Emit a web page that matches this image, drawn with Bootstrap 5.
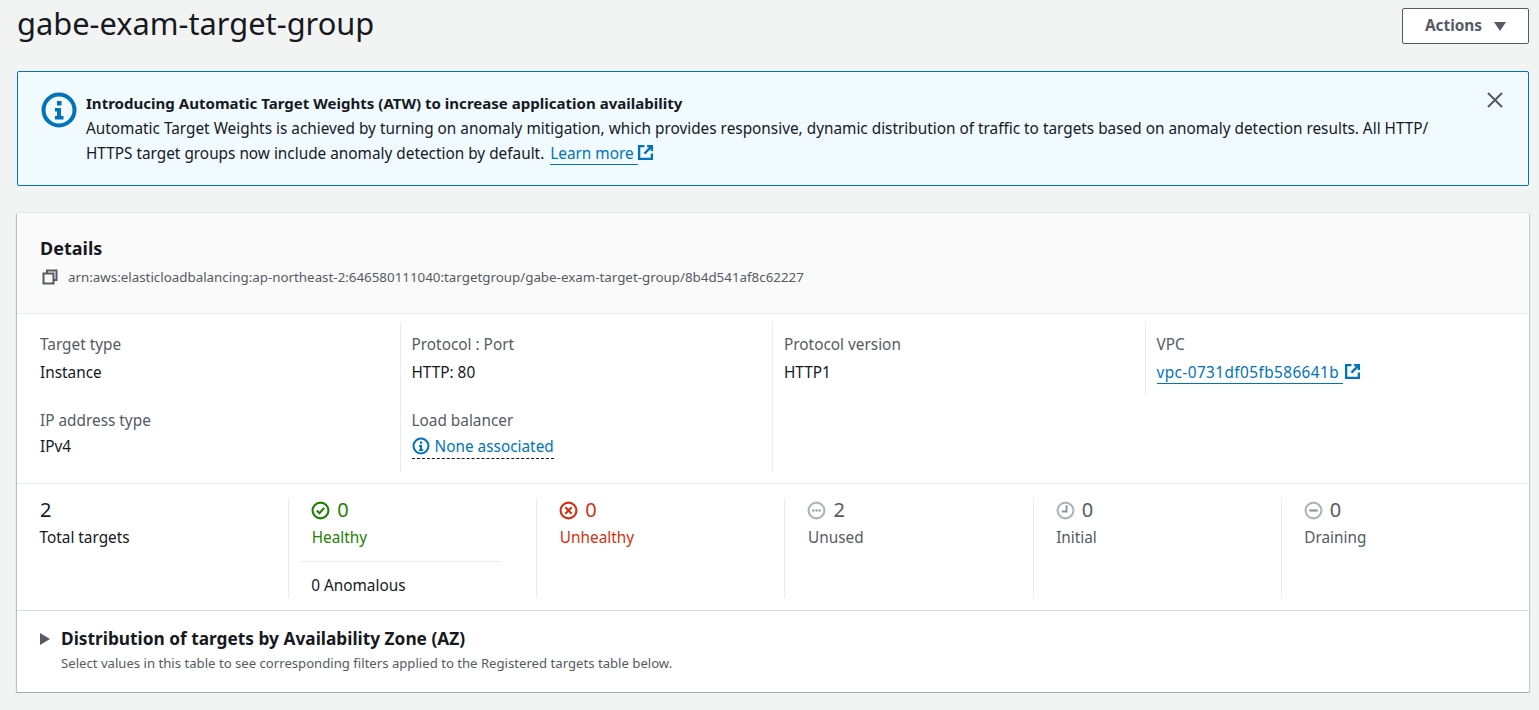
<!DOCTYPE html>
<html lang="en">
<head>
  <meta charset="UTF-8">
  <title>gabe-exam-target-group</title>
  <meta name="viewport" content="width=device-width, initial-scale=1">
  <link href="https://cdn.jsdelivr.net/npm/bootstrap@5.3.0/dist/css/bootstrap.min.css" rel="stylesheet">
  <style>
    body { background: #f2f3f3; color: #16191f; font-family: "Noto Sans", Roboto, sans-serif; font-size: 15.35px; line-height: 20px; }
    a { color: #0073bb; text-decoration: none; }
    .page-wrap { padding: 8px 10px 0 17px; }
    .page-title { font-size: 30.8px; line-height: 36px; font-weight: 400; margin: -3px 0 0; height: 33px; }
    .actions-btn { width: 127px; height: 36px; background: #fff; border: 1px solid #545b64; border-radius: 2px; color: #545b64; font-weight: 700; font-size: 15.4px; padding: 0; gap: 12px; }
    .atw-alert { height: 115px; margin-top: 27px; background: #f1faff; border: 1px solid #0073bb; border-radius: 2px; padding: 20px 24px 0 23px; line-height: 25px; }
    .atw-alert .alert-text { margin-left: 9px; margin-top: -1px; width: 1360px; }
    .bold-line { font-size: 15.05px; font-weight: 700; }
    .learn-link { border-bottom: 1px solid #0073bb; padding-bottom: 1px; }
    .learn-gap { margin-left: 2px; }
    .vpc-link { letter-spacing: .42px; }
    .ext-ico { margin-left: 1px; vertical-align: -2px; }
    .learn-gap + .ext-ico { margin-left: -1px; }
    .close-x { margin-left: auto; margin-right: 1px; }
    .details-card { margin-top: 27px; background: #fff; border: 0; border-bottom: 1px solid #9fabad; border-radius: 0; box-shadow: 0 1px 1px 0 rgba(0,28,36,.2), 1px 1px 1px 0 rgba(0,28,36,.15), -1px 1px 1px 0 rgba(0,28,36,.2), 0 -1px 1px 0 rgba(0,28,36,.06); height: 480px; }
    .details-head { height: 101px; background: #fafafa; border-bottom: 1px solid #eaeded; padding: 23px 23px 0; }
    .details-title { font-size: 18px; line-height: 24px; font-weight: 700; margin: 0; }
    .arn-line { color: #545b64; font-size: 13.35px; line-height: 20px; margin-top: 7px; gap: 10px; }
    .arn-line svg { margin-left: 2px; }
    .details-grid { height: 170px; padding: 8px 12px 0 10px; border-bottom: 1px solid #eaeded; }
    .info-cell { height: 74px; padding: 12px 12px 0 13px; line-height: 20px; }
    .info-row2 { height: 76px; padding-top: 14px; }
    .info-cell.with-rule { border-left: 1px solid #eaeded; padding-left: 11px; }
    .info-label { color: #545b64; margin-bottom: 8px; }
    .info-row2 .info-label { margin-bottom: 6px; }
    .none-link { border-bottom: 1px dashed #16191f; padding-bottom: 2px; display: inline-flex; align-items: center; gap: 5px; }
    .stats-band { height: 127px; padding: 14px 0 0 23px; border-bottom: 1px solid #d5dbdb; }
    .stat-cell { height: 100px; padding-left: 23px; }
    .stat-cell.stat-first { padding-left: 0; }
    .stat-cell.with-rule { border-left: 1px solid #eaeded; }
    .stat-num { font-size: 20px; line-height: 24px; gap: 7px; height: 24px; }
    .stat-num svg { margin-left: -1px; }
    .stat-name { margin-top: 5px; margin-left: -.5px; }
    .anomalous-rule { height: 1px; background: #eaeded; margin: 14px 34px 0 -12px; }
    .anomalous-text { margin-top: 13px; margin-left: -1px; }
    .tone-ok { color: #1d8102; }
    .tone-bad { color: #d13212; }
    .tone-off { color: #545b64; }
    .az-section { padding: 17px 23px 0; }
    .az-title { font-size: 17.3px; line-height: 22px; font-weight: 700; gap: 11px; }
    .az-sub { font-size: 13.15px; line-height: 16px; color: #545b64; margin: 5px 0 0 21px; }
  </style>
</head>
<body>
  <div class="page-wrap">

    <!-- Encabezado -->
    <div class="d-flex justify-content-between align-items-start">
      <h1 class="page-title">gabe-exam-target-group</h1>
      <button type="button" class="actions-btn d-flex align-items-center justify-content-center">
        Actions
        <svg width="12" height="9" viewBox="0 0 12 9"><path d="M0 0h12L6 9z" fill="#545b64"/></svg>
      </button>
    </div>

    <!-- Aviso -->
    <div class="atw-alert d-flex align-items-start">
      <svg width="36" height="36" viewBox="0 0 36 36" class="flex-shrink-0">
        <circle cx="18" cy="18" r="15.5" fill="none" stroke="#0073bb" stroke-width="4"/>
        <rect x="16" y="9" width="4.5" height="4.5" fill="#0073bb"/>
        <path d="M14 16h6v8h2.5v3.5h-8.5V24h2v-4.5h-2z" fill="#0073bb"/>
      </svg>
      <div class="alert-text">
        <div class="bold-line">Introducing Automatic Target Weights (ATW) to increase application availability</div>
        <div>Automatic Target Weights is achieved by turning on anomaly mitigation, which provides responsive, dynamic distribution of traffic to targets based on anomaly detection results. All HTTP/<br>HTTPS target groups now include anomaly detection by default. <a href="#" class="learn-link learn-gap">Learn more&nbsp;</a><svg width="17" height="17" viewBox="0 0 16 16" class="ext-ico"><path d="M7 2H2v12h12V9M9.5 2H14v4.500M14 2L7 9" fill="none" stroke="#0073bb" stroke-width="2.200"/></svg></div>
      </div>
      <svg width="16" height="16" viewBox="0 0 16 16" class="close-x"><path d="M1 1l14 14M15 1L1 15" stroke="#545b64" stroke-width="2"/></svg>
    </div>

    <!-- Tarjeta de detalles -->
    <div class="card details-card">
      <div class="details-head">
        <h2 class="details-title">Details</h2>
        <div class="arn-line d-flex align-items-center">
          <svg width="16" height="16" viewBox="0 0 16 16"><path d="M5 4V1.5h9.5V11H12M1.5 4.5H11.5V14.5H1.5z" fill="none" stroke="#545b64" stroke-width="2"/></svg>
          <span>arn:aws:elasticloadbalancing:ap-northeast-2:646580111040:targetgroup/gabe-exam-target-group/8b4d541af8c62227</span>
        </div>
      </div>

      <div class="details-grid">
        <div class="row g-0">
          <div class="col-3 info-cell">
            <div class="info-label">Target type</div>
            <div>Instance</div>
          </div>
          <div class="col-3 info-cell with-rule">
            <div class="info-label">Protocol : Port</div>
            <div>HTTP: 80</div>
          </div>
          <div class="col-3 info-cell with-rule">
            <div class="info-label">Protocol version</div>
            <div>HTTP1</div>
          </div>
          <div class="col-3 info-cell with-rule">
            <div class="info-label">VPC</div>
            <div><a href="#" class="learn-link vpc-link">vpc-0731df05fb586641b&nbsp;</a><svg width="17" height="17" viewBox="0 0 16 16" class="ext-ico"><path d="M7 2H2v12h12V9M9.5 2H14v4.500M14 2L7 9" fill="none" stroke="#0073bb" stroke-width="2.200"/></svg></div>
          </div>
        </div>
        <div class="row g-0">
          <div class="col-3 info-cell info-row2">
            <div class="info-label">IP address type</div>
            <div>IPv4</div>
          </div>
          <div class="col-3 info-cell info-row2 with-rule">
            <div class="info-label">Load balancer</div>
            <a href="#" class="none-link">
              <svg width="18" height="18" viewBox="0 0 18 18"><circle cx="9" cy="9" r="7.5" fill="none" stroke="#0073bb" stroke-width="2"/><rect x="8" y="4.5" width="2.2" height="2.2" fill="#0073bb"/><path d="M7 8h3v4.2h1.2V14H7v-1.8h1V9.700H7z" fill="#0073bb"/></svg>
              None associated
            </a>
          </div>
          <div class="col-3 info-cell info-row2 with-rule"></div>
          <div class="col-3 info-cell info-row2"></div>
        </div>
      </div>

      <div class="stats-band">
        <div class="row g-0">
          <div class="col-2 stat-cell stat-first">
            <div class="stat-num d-flex align-items-center">2</div>
            <div class="stat-name">Total targets</div>
          </div>
          <div class="col-2 stat-cell with-rule">
            <div class="stat-num d-flex align-items-center tone-ok">
              <svg width="19" height="19" viewBox="0 0 18 18"><circle cx="9" cy="9" r="7.500" fill="none" stroke="#1d8102" stroke-width="2"/><path d="M5.500 9l2.500 2.500 4.500-5" fill="none" stroke="#1d8102" stroke-width="2"/></svg>
              0
            </div>
            <div class="stat-name tone-ok">Healthy</div>
            <div class="anomalous-rule"></div>
            <div class="anomalous-text">0 Anomalous</div>
          </div>
          <div class="col-2 stat-cell with-rule">
            <div class="stat-num d-flex align-items-center tone-bad">
              <svg width="19" height="19" viewBox="0 0 18 18"><circle cx="9" cy="9" r="7.500" fill="none" stroke="#d13212" stroke-width="2"/><path d="M6 6l6 6M12 6l-6 6" stroke="#d13212" stroke-width="2"/></svg>
              0
            </div>
            <div class="stat-name tone-bad">Unhealthy</div>
          </div>
          <div class="col-2 stat-cell with-rule">
            <div class="stat-num d-flex align-items-center tone-off">
              <svg width="19" height="19" viewBox="0 0 18 18"><circle cx="9" cy="9" r="7.500" fill="none" stroke="#aab7b8" stroke-width="2"/><path d="M5 8h2v2H5zM8 8h2v2H8zM11 8h2v2h-2z" fill="#879596"/></svg>
              2
            </div>
            <div class="stat-name tone-off">Unused</div>
          </div>
          <div class="col-2 stat-cell with-rule">
            <div class="stat-num d-flex align-items-center tone-off">
              <svg width="19" height="19" viewBox="0 0 18 18"><circle cx="9" cy="9" r="7.500" fill="none" stroke="#aab7b8" stroke-width="2"/><path d="M10 4v6H5.500" fill="none" stroke="#879596" stroke-width="1.800"/></svg>
              0
            </div>
            <div class="stat-name tone-off">Initial</div>
          </div>
          <div class="col-2 stat-cell with-rule">
            <div class="stat-num d-flex align-items-center tone-off">
              <svg width="19" height="19" viewBox="0 0 18 18"><circle cx="9" cy="9" r="7.500" fill="none" stroke="#aab7b8" stroke-width="2"/><path d="M5 9h8" stroke="#879596" stroke-width="2"/></svg>
              0
            </div>
            <div class="stat-name tone-off">Draining</div>
          </div>
        </div>
      </div>

      <div class="az-section">
        <div class="az-title d-flex align-items-center">
          <svg width="10" height="12" viewBox="0 0 10 12"><path d="M0 0l10 6-10 6z" fill="#545b64"/></svg>
          Distribution of targets by Availability Zone (AZ)
        </div>
        <div class="az-sub">Select values in this table to see corresponding filters applied to the Registered targets table below.</div>
      </div>
    </div>
  </div>

  <script src="https://cdn.jsdelivr.net/npm/bootstrap@5.3.0/dist/js/bootstrap.bundle.min.js"></script>
</body>
</html>
